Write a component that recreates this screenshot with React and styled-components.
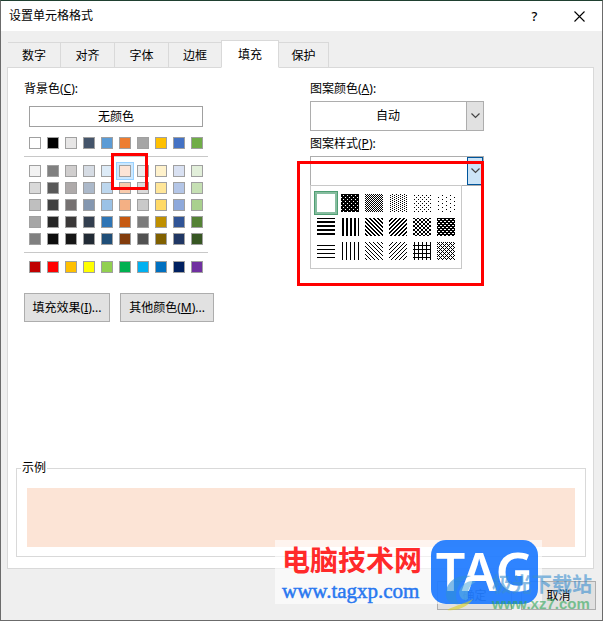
import React, { useState } from 'react';
import styled, { createGlobalStyle } from 'styled-components';

const GlobalStyle = createGlobalStyle`
  * { box-sizing: border-box; }
  body {
    margin: 0;
    background: #6b6b6b;
    color: #000;
    font: 12px/16px "Noto Sans", "Noto Sans CJK SC", sans-serif;
  }
  button, select { font: inherit; color: inherit; }
`;

const Dialog = styled.main`
  position: relative;
  min-height: 100vh;
  display: flex;
  flex-direction: column;
  background: #efefef;
  border: 1px solid #6b6b6b;
  border-top-color: #1f4030;
`;

const TitleBar = styled.header`
  display: flex;
  align-items: center;
  height: 30px;
  padding-left: 8px;
  background: #fff;
`;

const Title = styled.h1`
  flex: 1;
  margin: 0;
  font-size: 12px;
  font-weight: 400;
`;

const TitleButton = styled.button`
  display: flex;
  align-items: center;
  justify-content: center;
  width: 45px;
  height: 30px;
  padding: 0;
  border: 0;
  background: none;
  font-size: 13px;
  font-weight: 500;
`;

const Tabs = styled.div`
  display: flex;
  align-items: flex-end;
  height: 36px;
  padding-left: 7px;
`;

const Tab = styled.button`
  position: relative;
  width: ${p => p.$active ? 58 : p.$beforeActive ? 52 : 54}px;
  height: ${p => p.$active ? 28 : 26}px;
  margin-bottom: -1px;
  padding: 2px 0 0;
  border: 1px solid #d9d9d9;
  border-left-width: ${p => p.$active ? 1 : 0}px;
  border-right-width: ${p => p.$beforeActive ? 0 : 1}px;
  border-bottom-color: ${p => p.$active ? '#fff' : '#d9d9d9'};
  background: ${p => p.$active ? '#fff' : '#efefef'};

  &:first-child { width: 53px; }
  &:last-child { width: 50px; }
`;

const Panel = styled.section`
  flex: 1;
  display: flex;
  flex-direction: column;
  justify-content: space-between;
  margin: 0 8px 0 6px;
  padding: 12px 7px 11px 8px;
  border: 1px solid #d9d9d9;
  background: #fff;
`;

const Columns = styled.div`
  display: grid;
  grid-template-columns: 286px 1fr;
  padding-left: 8px;
`;

const Label = styled.label`
  display: block;
  height: 17px;
  padding-top: 1px;
`;

const ColorArea = styled.div`
  width: 184px;
`;

const NoColor = styled.button`
  display: block;
  width: 174px;
  height: 21px;
  margin: 9px 5px 10px;
  padding: 0;
  border: 1px solid #a0a0a0;
  background: #fff;
`;

const SwatchGrid = styled.div`
  display: grid;
  grid-template-columns: repeat(10, 12px);
  gap: 5px 6px;
  padding: 0 5px;
`;

const SwatchGroup = styled.div`
  position: relative;
  margin-top: 7px;
  padding-top: 8px;
  border-top: 1px solid #c8c8c8;
`;

const Swatch = styled.button`
  width: 12px;
  height: 12px;
  padding: 0;
  border: 1px solid #a0a0a0;
  background: ${p => p.$color};
  ${p => p.$selected && 'box-shadow: 0 0 0 2px #cce8ff, 0 0 0 3px #99d1ff;'}
`;

const RedFrame = styled.div`
  position: absolute;
  top: ${p => p.$top}px;
  left: ${p => p.$left}px;
  width: ${p => p.$width}px;
  height: ${p => p.$height}px;
  border: 3px solid #f00;
  pointer-events: none;
`;

const ButtonRow = styled.div`
  display: flex;
  gap: 10px;
  margin-top: 20px;
`;

const PushButton = styled.button`
  flex: none;
  width: ${p => p.$width}px;
  height: 29px;
  padding: 0;
  border: 1px solid #adadad;
  background: #e1e1e1;
`;

const Combo = styled.div`
  position: relative;
  width: 174px;
  height: 30px;
  margin: 4px 0;
`;

const Select = styled.select`
  width: 100%;
  height: 100%;
  padding: 0 18px 0 0;
  border: 1px solid #adadad;
  border-radius: 0;
  background: #fff;
  appearance: none;
  text-align: center;
  text-align-last: center;
`;

const Arrow = styled.span`
  position: absolute;
  top: ${p => p.$open ? 1 : 0}px;
  right: ${p => p.$open ? 1 : 0}px;
  bottom: ${p => p.$open ? 1 : 0}px;
  display: flex;
  align-items: center;
  justify-content: center;
  width: ${p => p.$open ? 16 : 18}px;
  border: 1px solid ${p => p.$open ? '#00559b' : '#adadad'};
  background: ${p => p.$open ? '#cce4f7' : '#e1e1e1'};
  pointer-events: none;
`;

const PatternMenu = styled.div`
  position: absolute;
  top: 29px;
  left: 0;
  display: grid;
  grid-template-columns: repeat(6, 24px);
  grid-auto-rows: 24px;
  width: 152px;
  height: 84px;
  padding: 5px 3px;
  border: 1px solid #c8c8c8;
  background: #fff;
`;

const PatternCell = styled.button`
  display: flex;
  align-items: center;
  justify-content: center;
  padding: 0;
  border: ${p => p.$selected ? '1px solid #4f9e73' : 0};
  background: ${p => p.$selected ? '#86bd9f' : 'none'};
`;

const Sample = styled.fieldset`
  min-width: 0;
  margin: 0;
  padding: 12px 10px 9px;
  border: 1px solid #d9d9d9;

  legend {
    margin-left: -6px;
    padding: 0 1px;
  }
`;

const SampleFill = styled.div`
  height: 59px;
`;

const Footer = styled.footer`
  display: flex;
  justify-content: flex-end;
  gap: 9px;
  padding: 12px 6px 10px;
`;

const SiteBanner = styled.div`
  position: absolute;
  right: 60px;
  bottom: 16px;
  display: flex;
  justify-content: space-between;
  width: 267px;
  height: 64px;
  padding: 0 4px 0 7px;
  background: rgba(255, 255, 255, 0.6);
  pointer-events: none;
`;

const BannerText = styled.div`
  color: #2a78f0;
  font: 21px/26px "Liberation Serif", serif;
  -webkit-text-stroke: 0.5px #2a78f0;

  strong {
    display: block;
    color: #ff2a2a;
    font: 700 28px/38px "Noto Sans CJK SC", sans-serif;
    -webkit-text-stroke: 0;
  }
`;

const Tag = styled.div`
  width: 107px;
  border-radius: 15px;
  background: rgba(10, 110, 255, 0.85);
  color: #fff;
  font: 600 52px/62px "Noto Sans", sans-serif;
  text-align: center;
`;

const Watermark = styled.div`
  position: absolute;
  right: 10px;
  bottom: 7px;
  display: flex;
  align-items: center;
  gap: 12px;
  opacity: 0.6;
  pointer-events: none;
`;

const WatermarkText = styled.div`
  color: #30a858;
  font: 700 15px/18px "Liberation Sans", sans-serif;

  strong {
    display: block;
    color: #3b8fd0;
    font: 700 20px/22px "Noto Sans CJK SC", sans-serif;
  }
`;

const baseColors = ['#fff', '#000', '#e7e6e6', '#44546a', '#5b9bd5', '#ed7d31', '#a5a5a5', '#ffc000', '#4472c4', '#70ad47'];

const tints = [
  '#f2f2f2', '#808080', '#d0cece', '#d6dce4', '#ddebf7', '#fce4d6', '#ededed', '#fff2cc', '#d9e1f2', '#e2efda',
  '#d9d9d9', '#595959', '#aeaaaa', '#acb9ca', '#bdd7ee', '#f8cbad', '#dbdbdb', '#ffe699', '#b4c6e7', '#c6e0b4',
  '#bfbfbf', '#404040', '#757171', '#8497b0', '#9bc2e6', '#f4b084', '#c9c9c9', '#ffd966', '#8ea9db', '#a9d08e',
  '#a6a6a6', '#262626', '#3a3838', '#333f4f', '#2f75b5', '#c65911', '#7b7b7b', '#bf8f00', '#305496', '#548235',
  '#808080', '#0d0d0d', '#161616', '#222b35', '#1f4e78', '#833c0c', '#525252', '#806000', '#203764', '#375623',
];

const standardColors = ['#c00000', '#f00', '#ffc000', '#ff0', '#92d050', '#00b050', '#00b0f0', '#0070c0', '#002060', '#7030a0'];

// each pattern is a small bitmap that repeats over the cell, # is ink
const patterns = [
  ['无', ['.']],
  ['75% 灰色', ['####', '##.#', '####', '.###']],
  ['50% 灰色', ['#.', '.#']],
  ['25% 灰色', ['...#', '.#..']],
  ['12.5% 灰色', ['....', '.#..', '....', '...#']],
  ['6.25% 灰色', ['........', '.....#..', '........', '.#......']],
  ['水平条纹', ['#', '.', '.', '#']],
  ['垂直条纹', ['.##.']],
  ['逆对角线条纹', ['##..', '.##.', '..##', '#..#']],
  ['对角线条纹', ['..##', '.##.', '##..', '#..#']],
  ['对角线剖面线', ['##..', '..##', '..##', '##..']],
  ['粗对角线剖面线', ['####', '#..#', '####', '.##.']],
  ['细水平条纹', ['.', '.', '.', '#']],
  ['细垂直条纹', ['.#..']],
  ['细逆对角线条纹', ['#...', '.#..', '..#.', '...#']],
  ['细对角线条纹', ['...#', '..#.', '.#..', '#...']],
  ['细水平剖面线', ['.#..', '.#..', '.#..', '####']],
  ['细对角线剖面线', ['#.#.', '.#..', '#.#.', '...#']],
];

function PatternTile({ rows }) {
  let d = '';
  for (let y = 0; y < 18; y++) {
    const row = rows[y % rows.length];
    for (let x = 0; x < 18; x++) {
      if (row[x % row.length] === '#') d += `M${x} ${y}h1v1h-1z`;
    }
  }
  return (
    <svg width="18" height="18" shapeRendering="crispEdges">
      <rect width="18" height="18" fill="#fff" />
      <path d={d} />
    </svg>
  );
}

function Chevron() {
  return (
    <svg width="9" height="6" viewBox="0 0 9 6">
      <path d="M.5 .5 4.5 4.5 8.5 .5" fill="none" stroke="#444" strokeWidth="1.2" />
    </svg>
  );
}

function Swatches({ colors, selected, onPick }) {
  return (
    <SwatchGrid>
      {colors.map((c, i) => (
        <Swatch key={i} $color={c} $selected={c === selected} aria-label={c} onClick={() => onPick(c)} />
      ))}
    </SwatchGrid>
  );
}

function App() {
  const tabs = ['数字', '对齐', '字体', '边框', '填充', '保护'];
  const [tab, setTab] = useState('填充');
  const [color, setColor] = useState('#fce4d6');
  const [pattern, setPattern] = useState(0);

  return (
    <Dialog>
      <GlobalStyle />
      <TitleBar>
        <Title>设置单元格格式</Title>
        <TitleButton>?</TitleButton>
        <TitleButton aria-label="关闭">
          <svg width="11" height="11" viewBox="0 0 11 11">
            <path d="M.5 .5l10 10M10.5 .5l-10 10" stroke="#000" strokeWidth="1.1" />
          </svg>
        </TitleButton>
      </TitleBar>

      <Tabs role="tablist">
        {tabs.map((t, i) => (
          <Tab key={t} role="tab" aria-selected={t === tab} $active={t === tab}
            $beforeActive={tabs[i + 1] === tab} onClick={() => setTab(t)}>{t}</Tab>
        ))}
      </Tabs>

      <Panel>
        <Columns>
          <ColorArea>
            <Label as="div">背景色(<u>C</u>):</Label>
            <NoColor onClick={() => setColor('#fff')}>无颜色</NoColor>
            <Swatches colors={baseColors} onPick={setColor} />
            <SwatchGroup>
              <Swatches colors={tints} selected={color} onPick={setColor} />
              <RedFrame $top={-4} $left={87} $width={37} $height={37} />
            </SwatchGroup>
            <SwatchGroup>
              <Swatches colors={standardColors} onPick={setColor} />
            </SwatchGroup>
            <ButtonRow>
              <PushButton $width={86}>填充效果(<u>I</u>)...</PushButton>
              <PushButton $width={94}>其他颜色(<u>M</u>)...</PushButton>
            </ButtonRow>
          </ColorArea>

          <div>
            <Label htmlFor="pattern-color">图案颜色(<u>A</u>):</Label>
            <Combo>
              <Select id="pattern-color"><option>自动</option></Select>
              <Arrow><Chevron /></Arrow>
            </Combo>
            <Label htmlFor="pattern-style">图案样式(<u>P</u>):</Label>
            <Combo>
              <Select id="pattern-style"><option></option></Select>
              <Arrow $open><Chevron /></Arrow>
              <PatternMenu>
                {patterns.map(([name, rows], i) => (
                  <PatternCell key={name} aria-label={name} $selected={i === pattern} onClick={() => setPattern(i)}>
                    <PatternTile rows={rows} />
                  </PatternCell>
                ))}
              </PatternMenu>
              <RedFrame $top={5} $left={-13} $width={187} $height={125} />
            </Combo>
          </div>
        </Columns>

        <Sample>
          <legend>示例</legend>
          <SampleFill style={{ background: color }} />
        </Sample>
      </Panel>

      <Footer>
        <PushButton $width={75}>确定</PushButton>
        <PushButton $width={75}>取消</PushButton>
      </Footer>

      <SiteBanner>
        <BannerText><strong>电脑技术网</strong>www.tagxp.com</BannerText>
        <Tag>TAG</Tag>
      </SiteBanner>
      <Watermark>
        <svg width="36" height="38" viewBox="0 0 36 38">
          <path d="M2 22C1 9 11 0 27 2 17 5 12 13 12 22c0 4 2 7 4 8C8 31 3 28 2 22z" fill="#2f8fd8" />
          <path d="M15 18C18 9 26 5 32 8c-7 3-9 9-8 17-3 2-8 1-9-7z" fill="#5ab0e0" />
          <path d="M3 36c9 1 20-2 26-11-9 5-17 6-26 11z" fill="#d8d020" />
        </svg>
        <WatermarkText><strong>极光下载站</strong>www.xz7.com</WatermarkText>
      </Watermark>
    </Dialog>
  );
}

export default App;
